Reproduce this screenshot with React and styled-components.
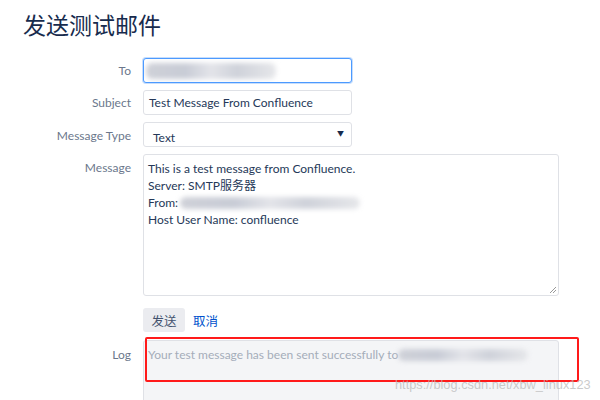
import React from 'react';
import styled, { createGlobalStyle } from 'styled-components';

const GlobalStyle = createGlobalStyle`
  html, body {
    margin: 0;
    padding: 0;
    background: #fff;
  }
  body {
    font-family: 'Lato', 'Noto Sans CJK SC', sans-serif;
    color: #172b4d;
    overflow: hidden;
  }
`;

const Page = styled.div`
  position: relative;
  width: 600px;
  height: 400px;
  overflow: hidden;
  padding: 9px 0 0 23px;
  box-sizing: border-box;
`;

const Title = styled.h1`
  margin: 0 0 19px 0;
  font-family: 'Noto Sans CJK SC', sans-serif;
  font-size: 23px;
  font-weight: 400;
  line-height: 30px;
  color: #172b4d;
`;

const Form = styled.div`
  display: grid;
  grid-template-columns: 108px 416px;
  column-gap: 12px;
  row-gap: 7px;
  align-items: start;
`;

const Label = styled.label`
  text-align: right;
  font-size: 12px;
  color: #6b778c;
  line-height: 17px;
  padding-top: ${(p) => p.$top || 4}px;
`;

const Field = styled.div`
  width: ${(p) => p.$width || 209}px;
  height: ${(p) => p.$height || 25}px;
  box-sizing: border-box;
  border: 1px solid ${(p) => (p.$focus ? '#4c9aff' : '#dfe1e6')};
  box-shadow: ${(p) => (p.$focus ? '0 0 0 1px #c7defc' : 'none')};
  border-radius: 3px;
  background: ${(p) => p.$bg || '#fff'};
  padding: ${(p) => p.$pad || '4px 5px'};
  font-size: 12px;
  line-height: 17px;
  color: ${(p) => p.$color || '#253858'};
  display: flex;
  align-items: ${(p) => (p.$multi ? 'flex-start' : 'center')};
  flex-direction: ${(p) => (p.$multi ? 'column' : 'row')};
  position: relative;
  overflow: hidden;
`;

const SelectBox = styled(Field)`
  justify-content: space-between;
  padding: 6px 7px 1px 9px;
`;

const Caret = styled.span`
  font-size: 7px;
  color: #172b4d;
  margin-top: -7px;
`;

const Line = styled.div`
  display: flex;
  align-items: center;
  white-space: nowrap;
`;

const Blur = styled.span`
  display: inline-block;
  width: ${(p) => p.$w}px;
  height: ${(p) => p.$h || 14}px;
  margin-left: ${(p) => p.$ml || 0}px;
  background: linear-gradient(90deg, #cfd1d8, #c8ccd6 30%, #e3e4e9 50%, #cfd2da 70%, #e6e7ea);
  filter: blur(2.5px);
  border-radius: 6px;
`;

const Resize = styled.svg`
  position: absolute;
  right: 1px;
  bottom: 1px;
`;

const Actions = styled.div`
  display: flex;
  align-items: center;
  gap: 8px;
  margin: 5px 0 1px;
`;

const Button = styled.button`
  height: 24px;
  width: 42px;
  border: none;
  border-radius: 3px;
  background: #ebecf0;
  color: #42526e;
  font-family: 'Noto Sans CJK SC', sans-serif;
  font-size: 12.5px;
  padding: 0;
`;

const LinkButton = styled.a`
  color: #0052cc;
  font-family: 'Noto Sans CJK SC', sans-serif;
  font-size: 12.5px;
  text-decoration: none;
`;

const Highlight = styled.div`
  position: absolute;
  left: 145px;
  top: 337px;
  width: 434px;
  height: 45px;
  box-sizing: border-box;
  border: 2.5px solid #ff1a1a;
  border-radius: 2px;
  pointer-events: none;
`;

const Watermark = styled.div`
  position: absolute;
  left: 395px;
  top: 377px;
  font-family: 'Liberation Sans', sans-serif;
  font-size: 12.8px;
  line-height: 16px;
  white-space: nowrap;
  color: rgba(185, 185, 185, 0.75);
  pointer-events: none;
`;

export default function App() {
  return (
    <>
      <GlobalStyle />
      <Page>
        <Title>发送测试邮件</Title>
        <Form>
          <Label $top={4}>To</Label>
          <Field $focus>
            <Blur $w={130} $h={16} $ml={-3} />
          </Field>

          <Label $top={4}>Subject</Label>
          <Field>Test Message From Confluence</Field>

          <Label $top={5}>Message Type</Label>
          <SelectBox>
            <span>Text</span>
            <Caret>▼</Caret>
          </SelectBox>

          <Label $top={5}>Message</Label>
          <Field $width={416} $height={142} $multi $pad="5px 4px">
            <Line>This is a test message from Confluence.</Line>
            <Line>Server: SMTP服务器</Line>
            <Line>
              From: <Blur $w={180} $h={12} $ml={2} />
            </Line>
            <Line>Host User Name: confluence</Line>
            <Resize width="8" height="8" viewBox="0 0 8 8">
              <path d="M7 1 L1 7 M7 4 L4 7" stroke="#999" strokeWidth="1" />
            </Resize>
          </Field>

          <span />
          <Actions>
            <Button>发送</Button>
            <LinkButton>取消</LinkButton>
          </Actions>

          <Label $top={6}>Log</Label>
          <Field $width={416} $height={80} $multi $bg="#f4f5f7" $color="#a5adba" $pad="5px 4px">
            <Line>
              Your test message has been sent successfully to
              <Blur $w={130} $h={12} $ml={0} />
            </Line>
          </Field>
        </Form>
        <Highlight />
        <Watermark>https://blog.csdn.net/xbw_linux123</Watermark>
      </Page>
    </>
  );
}
